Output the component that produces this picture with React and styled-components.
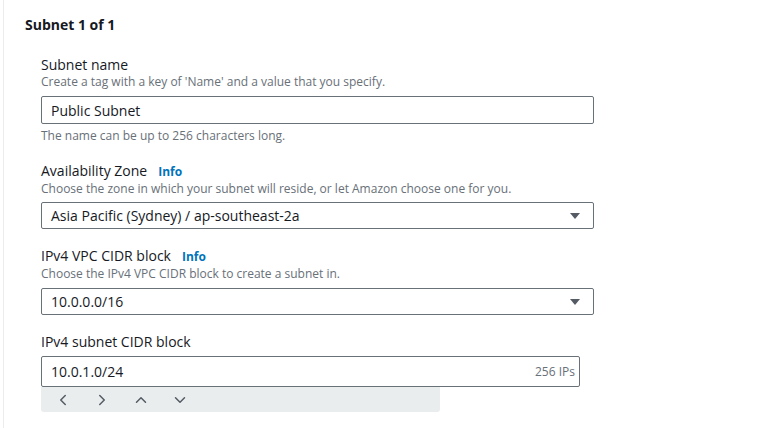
import React from 'react'
import styled, {createGlobalStyle} from "styled-components"
import {FiChevronLeft, FiChevronRight, FiChevronUp, FiChevronDown} from 'react-icons/fi'

const Global = createGlobalStyle`
    html, body {
        margin: 0;
        padding: 0;
        background: #ffffff;
        font-family: "Open Sans", "Liberation Sans", sans-serif;
        color: #16191f;
    }
`

const Page = styled.div`
    width: 782px;
    height: 428px;
    overflow: hidden;
    padding-left: 3px;
    box-sizing: border-box;
`

const Card = styled.div`
    height: 100%;
    border-left: 1px solid #eaeded;
    padding: 15px 0 0 21px;
    box-sizing: border-box;
`

const Heading = styled.h2`
    margin: 0;
    font-size: 14px;
    line-height: 20px;
    font-weight: 700;
`

const Fields = styled.div`
    display: flex;
    flex-direction: column;
    gap: 18px;
    padding: 21px 0 0 16px;
`

const Field = styled.div`
    display: flex;
    flex-direction: column;
`

const Label = styled.div`
    display: flex;
    align-items: baseline;
    gap: 11px;
    font-size: 14px;
    line-height: 18px;
`

const Info = styled.a`
    color: #0073bb;
    font-size: 12px;
    font-weight: 700;
    text-decoration: none;
`

const Desc = styled.div`
    font-size: 12px;
    line-height: 16px;
    color: #687078;
`

const Hint = styled(Desc)`
    margin-top: 4px;
`

const Box = styled.div`
    margin-top: ${p => p.$gap || 6}px;
    width: ${p => p.$width || 553}px;
    height: ${p => p.$height || 28}px;
    border: 1px solid #687078;
    border-radius: 2px;
    box-sizing: border-box;
    display: flex;
    align-items: center;
    justify-content: space-between;
    padding: 0 12px 0 9px;
    font-size: 14px;
    background: #fff;
`

const Suffix = styled.span`
    font-size: 12px;
    color: #687078;
    margin-right: -8px;
`

const Caret = styled.span`
    width: 0;
    height: 0;
    border-left: 5px solid transparent;
    border-right: 5px solid transparent;
    border-top: 6px solid #545b64;
    margin-right: 1px;
`

const Toolbar = styled.div`
    width: 399px;
    height: 25px;
    background: #eaeded;
    border-radius: 0 0 3px 3px;
    display: flex;
    align-items: center;
    gap: 21px;
    padding-left: 13px;
    box-sizing: border-box;
    color: #545b64;
    font-size: 18px;
`

const Tool = styled.span`
    display: flex;
    align-items: center;
`

const App = () => {
    return (
        <>
            <Global/>
            <Page>
                <Card>
                    <Heading>Subnet 1 of 1</Heading>
                    <Fields>
                        <Field>
                            <Label>Subnet name</Label>
                            <Desc>Create a tag with a key of 'Name' and a value that you specify.</Desc>
                            <Box>Public Subnet</Box>
                            <Hint>The name can be up to 256 characters long.</Hint>
                        </Field>
                        <Field>
                            <Label>Availability Zone <Info>Info</Info></Label>
                            <Desc>Choose the zone in which your subnet will reside, or let Amazon choose one for you.</Desc>
                            <Box $gap={5} $height={27}>
                                <span>Asia Pacific (Sydney) / ap-southeast-2a</span>
                                <Caret/>
                            </Box>
                        </Field>
                        <Field>
                            <Label>IPv4 VPC CIDR block <Info>Info</Info></Label>
                            <Desc>Choose the IPv4 VPC CIDR block to create a subnet in.</Desc>
                            <Box $gap={6} $height={27}>
                                <span>10.0.0.0/16</span>
                                <Caret/>
                            </Box>
                        </Field>
                        <Field>
                            <Label>IPv4 subnet CIDR block</Label>
                            <Box $gap={5} $height={31} $width={539}>
                                <span>10.0.1.0/24</span>
                                <Suffix>256 IPs</Suffix>
                            </Box>
                            <Toolbar>
                                <Tool><FiChevronLeft/></Tool>
                                <Tool><FiChevronRight/></Tool>
                                <Tool><FiChevronUp/></Tool>
                                <Tool><FiChevronDown/></Tool>
                            </Toolbar>
                        </Field>
                    </Fields>
                </Card>
            </Page>
        </>
    )
}

export default App
